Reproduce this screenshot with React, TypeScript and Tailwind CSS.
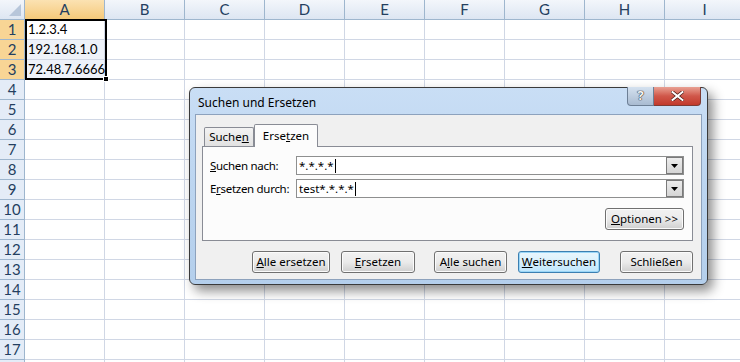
import React from 'react'

const COLS = ['A', 'B', 'C', 'D', 'E', 'F', 'G', 'H', 'I']
const ROWS = Array.from({ length: 17 }, (_, i) => i + 1)
const DATA: Record<number, string> = { 1: '1.2.3.4', 2: '192.168.1.0', 3: '72.48.7.6666' }

const uiFont = { fontFamily: '"Noto Sans", "Open Sans", sans-serif' }

function Sheet() {
  return (
    <div className="relative overflow-hidden" style={{ fontFamily: 'Lato, "Open Sans", sans-serif' }}>
      <div className="flex h-[20px]">
        <div className="w-[25px] shrink-0 border-r border-b border-[#9eb6ce] bg-gradient-to-b from-[#f3f6fb] to-[#dde6f2] relative">
          <svg className="absolute right-[3px] bottom-[3px]" width="12" height="12" viewBox="0 0 12 12">
            <polygon points="12,0 12,12 0,12" fill="#b7c6da" />
          </svg>
        </div>
        {COLS.map((c) => (
          <div
            key={c}
            className={`w-[80px] shrink-0 border-r border-b border-[#9eb6ce] flex items-center justify-center text-[15px] text-[#243f60] ${
              c === 'A' ? 'bg-gradient-to-b from-[#fbe2b2] to-[#f5c979]' : 'bg-gradient-to-b from-[#f3f6fb] to-[#dde6f2]'
            }`}
          >
            {c}
          </div>
        ))}
      </div>
      {ROWS.map((r) => (
        <div key={r} className="flex h-[20px]">
          <div
            className={`w-[25px] shrink-0 border-r border-b border-[#9eb6ce] flex items-center justify-center text-[15px] text-[#243f60] ${
              r <= 3 ? 'bg-[#f8d595]' : 'bg-[#e4ecf7]'
            }`}
          >
            {r}
          </div>
          {COLS.map((c) => (
            <div
              key={c}
              className={`w-[80px] shrink-0 border-r border-b border-[#d0d7e5] flex items-end pl-[3px] pb-[1px] text-[13px] text-black leading-[18px] whitespace-nowrap ${
                c === 'A' && r > 1 && r <= 3 ? 'bg-[#eef2f9]' : 'bg-white'
              }`}
            >
              {c === 'A' ? DATA[r] : ''}
            </div>
          ))}
        </div>
      ))}
      {/* top of row 18, mostly off screen */}
      <div className="flex h-[20px]">
        <div className="w-[25px] shrink-0 border-r border-[#9eb6ce] bg-[#e4ecf7]" />
        {COLS.map((c) => (
          <div key={c} className="w-[80px] shrink-0 border-r border-[#d0d7e5] bg-white" />
        ))}
      </div>
      {/* selection A1:A3 */}
      <div className="absolute left-[25px] top-[19px] w-[82px] h-[61px] border-2 border-black pointer-events-none" />
      <div className="absolute left-[103px] top-[76px] w-[6px] h-[6px] bg-black border border-white" />
    </div>
  )
}

function Btn({
  children,
  w,
  focused,
}: {
  children: React.ReactNode
  w: number
  focused?: boolean
}) {
  return (
    <div
      className={`h-[22px] rounded-[3px] border flex items-center justify-center text-[11.5px] text-black whitespace-nowrap ${
        focused
          ? 'border-[#3c7fb1] bg-gradient-to-b from-[#eaf6fd] via-[#d9f0fc] to-[#bee6fd] shadow-[inset_0_0_0_1px_#9ad6f7]'
          : 'border-[#707070] bg-gradient-to-b from-[#f2f2f2] via-[#ebebeb] to-[#cfcfcf] shadow-[inset_0_0_0_1px_#fbfbfb]'
      }`}
      style={{ width: w }}
    >
      {children}
    </div>
  )
}

function Combo({ value }: { value: string }) {
  return (
    <div className="w-[388px] h-[19px] border border-[#8e8f8f] bg-white flex items-center">
      <div className="flex-1 pl-[2px] text-[11.5px] leading-[17px] text-black flex items-center">
        {value}
        <span className="inline-block w-px h-[14px] bg-black ml-[1px]" />
      </div>
      <div className="w-[17px] h-[17px] border border-[#7a7a7a] bg-gradient-to-b from-[#ececec] to-[#d5d5d5] flex items-center justify-center">
        <svg width="7" height="4" viewBox="0 0 7 4">
          <polygon points="0,0 7,0 3.5,4" fill="#000" />
        </svg>
      </div>
    </div>
  )
}

function Dialog() {
  return (
    <div
      className="absolute left-[189px] top-[87px] w-[519px] h-[198px] rounded-[6px] border border-[#3a3a3a] bg-gradient-to-b from-[#c9def5] via-[#bcd5f0] to-[#b4cfec] shadow-[5px_6px_12px_rgba(0,0,0,0.45)] flex flex-col px-[5px] pb-[4px]"
      style={uiFont}
    >
      <div className="h-[26px] flex items-start justify-between">
        <div className="pt-[6px] pl-[3px] text-[12px] text-black">Suchen und Ersetzen</div>
        <div className="flex mr-[1px] -mt-px">
          <div className="w-[27px] h-[19px] rounded-bl-[4px] border border-[#6d7f95] border-t-0 bg-gradient-to-b from-[#d4e1ef] to-[#a9bbd1] flex items-center justify-center text-[13px] font-bold text-[#f6f6f6] [text-shadow:0_0_1px_#333,0_0_1px_#333,0_0_1px_#333]">
            ?
          </div>
          <div className="w-[47px] h-[19px] rounded-br-[4px] border border-[#7e3b34] border-t-0 border-l-0 bg-gradient-to-b from-[#e8a093] via-[#d0574a] to-[#c2392b] flex items-center justify-center">
            <svg width="13" height="10" viewBox="0 0 13 10">
              <path d="M1.5 1 L11.5 9 M11.5 1 L1.5 9" stroke="#4a1a14" strokeWidth="3.4" strokeLinecap="square" />
              <path d="M1.5 1 L11.5 9 M11.5 1 L1.5 9" stroke="#fff" strokeWidth="2" strokeLinecap="square" />
            </svg>
          </div>
        </div>
      </div>
      <div className="flex-1 border border-[#8da2bd] bg-[#f0f0f0] pl-[6px] pr-[8px] pt-[8px]">
        <div className="flex items-end h-[23px] pl-[2px]">
          <div className="h-[19px] w-[50px] border border-[#898c95] border-b-0 rounded-t-[2px] bg-gradient-to-b from-[#f3f3f3] to-[#e1e1e1] text-[11.5px] flex items-center justify-center">
            Suche<u>n</u>
          </div>
          <div className="h-[23px] w-[64px] border border-[#898c95] border-b-0 rounded-t-[2px] bg-[#fcfcfc] text-[11.5px] flex items-start pt-[2px] justify-center relative z-10 -mb-px">
            Erse<u>t</u>zen
          </div>
        </div>
        <div className="border border-[#898c95] bg-[#fcfcfc] h-[95px] pt-[9px] pl-[7px] pr-[7px] flex flex-col">
          <div className="flex items-center h-[19px]">
            <div className="w-[86px] text-[11.5px] tracking-[-0.3px] whitespace-nowrap">
              <u>S</u>uchen nach:
            </div>
            <Combo value="*.*.*.*" />
          </div>
          <div className="flex items-center h-[19px] mt-[4px]">
            <div className="w-[86px] text-[11.5px] tracking-[-0.3px] whitespace-nowrap">
              E<u>r</u>setzen durch:
            </div>
            <Combo value="test*.*.*.*" />
          </div>
          <div className="flex justify-end mt-[10px] pr-[1px]">
            <Btn w={79}>
              <u>O</u>ptionen &gt;&gt;
            </Btn>
          </div>
        </div>
        <div className="flex justify-end mt-[10px]">
          <Btn w={78}>
            <u>A</u>lle ersetzen
          </Btn>
          <div className="ml-[11px]">
            <Btn w={74}>
              <u>E</u>rsetzen
            </Btn>
          </div>
          <div className="ml-[19px]">
            <Btn w={73}>
              A<u>l</u>le suchen
            </Btn>
          </div>
          <div className="ml-[11px]">
            <Btn w={82} focused>
              <u>W</u>eitersuchen
            </Btn>
          </div>
          <div className="ml-[20px]">
            <Btn w={73}>Schließen</Btn>
          </div>
        </div>
      </div>
    </div>
  )
}

export default function App() {
  return (
    <div className="relative w-[740px] h-[362px] overflow-hidden bg-white">
      <Sheet />
      <Dialog />
    </div>
  )
}
